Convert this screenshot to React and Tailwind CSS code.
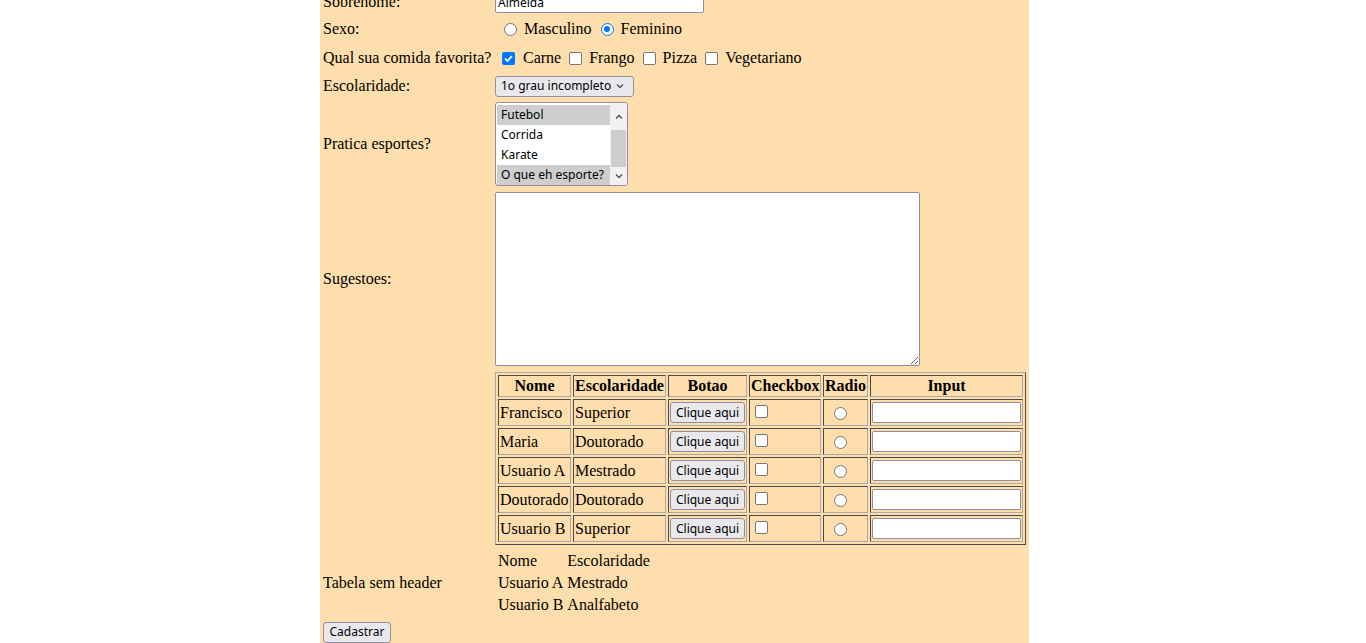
import React from 'react';

// controles no estilo padrao do navegador
const ctl = "font-['Noto_Sans',sans-serif] text-[12px] text-black";
const ctlBox = `${ctl} bg-[#e9e9ed] border border-[#8f8f9d] rounded-[3px] flex items-center leading-none`;
const btn = `${ctlBox} justify-center`;
const txt = 'bg-white border border-[#8f8f9d] rounded-[2px]';

const dados = [
  ['Francisco', 'Superior'],
  ['Maria', 'Doutorado'],
  ['Usuario A', 'Mestrado'],
  ['Doutorado', 'Doutorado'],
  ['Usuario B', 'Superior'],
];

const esportes = [
  { nome: 'Futebol', sel: true },
  { nome: 'Corrida', sel: false },
  { nome: 'Karate', sel: false },
  { nome: 'O que eh esporte?', sel: true },
];

const cellBorder = 'border border-t-[#4a4a4a] border-l-[#4a4a4a] border-r-[#a9a9a9] border-b-[#a9a9a9] p-px';

function Chevron({ up = false, className = '' }) {
  return (
    <svg width="8" height="6" viewBox="0 0 8 6" className={className}>
      <path
        d={up ? 'M1 4.5 L4 1.5 L7 4.5' : 'M1 1.5 L4 4.5 L7 1.5'}
        fill="none"
        stroke="#505050"
        strokeWidth="1.4"
      />
    </svg>
  );
}

function Check({ checked = false, className = '' }) {
  if (checked) {
    return (
      <span className={`w-[13px] h-[13px] shrink-0 rounded-[2px] bg-[#0075ff] flex items-center justify-center ${className}`}>
        <svg width="11" height="11" viewBox="0 0 11 11">
          <path d="M2 5.6 L4.4 8 L9 3" fill="none" stroke="white" strokeWidth="1.8" />
        </svg>
      </span>
    );
  }
  return (
    <span className={`w-[13px] h-[13px] shrink-0 rounded-[2px] bg-white border-[1.5px] border-[#767676] ${className}`} />
  );
}

function Radio({ checked = false, className = '' }) {
  if (checked) {
    return (
      <span className={`w-[13px] h-[13px] shrink-0 rounded-full bg-white border-[1.5px] border-[#0075ff] flex items-center justify-center ${className}`}>
        <span className="w-[6px] h-[6px] rounded-full bg-[#0075ff]" />
      </span>
    );
  }
  return (
    <span className={`w-[13px] h-[13px] shrink-0 rounded-full bg-white border-[1.5px] border-[#767676] ${className}`} />
  );
}

function Row({ label, h, children }) {
  return (
    <div className="grid grid-cols-[175px_1fr] items-center" style={{ height: h }}>
      <div className="pl-[3px]">{label}</div>
      <div className="flex items-center">{children}</div>
    </div>
  );
}

export default function App() {
  return (
    <div className="min-h-screen bg-white">
      <div className="ml-[320px] w-[709px] h-[643px] bg-[#ffdead] overflow-hidden font-['Liberation_Serif',serif] text-[16px] leading-[18px] text-black">
        <div className="-mt-[10px]">
          {/* Sobrenome */}
          <Row label="Sobrenome:" h={24}>
            <input
              readOnly
              value="Almeida"
              className={`${ctl} ${txt} w-[209px] h-[21px] px-[2px]`}
            />
          </Row>

          {/* Sexo */}
          <Row label="Sexo:" h={30}>
            <Radio className="ml-[9px] mr-[7px]" />
            <span>Masculino</span>
            <Radio checked className="ml-[9px] mr-[7px]" />
            <span>Feminino</span>
          </Row>

          {/* Comida */}
          <Row label="Qual sua comida favorita?" h={28}>
            <Check checked className="ml-[7px] mr-[8px]" />
            <span>Carne</span>
            <Check className="ml-[8px] mr-[7px]" />
            <span>Frango</span>
            <Check className="ml-[8px] mr-[7px]" />
            <span>Pizza</span>
            <Check className="ml-[8px] mr-[7px]" />
            <span>Vegetariano</span>
          </Row>

          {/* Escolaridade */}
          <Row label="Escolaridade:" h={28}>
            <div className={`${ctlBox} w-[139px] h-[21px] justify-between pl-[5px] pr-[9px]`}>
              <span>1o grau incompleto</span>
              <Chevron />
            </div>
          </Row>

          {/* Esportes */}
          <Row label="Pratica esportes?" h={88}>
            <div className="w-[133px] h-[84px] bg-white border border-[#8f8f9d] rounded-[3px] flex overflow-hidden">
              <div className={`${ctl} flex-1 pt-[2px] pl-px`}>
                {esportes.map((e) => (
                  <div
                    key={e.nome}
                    className={`h-[20px] flex items-center pl-[4px] ${e.sel ? 'bg-[#cecece]' : ''}`}
                  >
                    {e.nome}
                  </div>
                ))}
              </div>
              <div className="w-[17px] bg-[#f1f1f1] flex flex-col items-center">
                <div className="h-[27px] flex items-center">
                  <Chevron up />
                </div>
                <div className="w-[15px] flex-1 bg-[#cdcdcd]" />
                <div className="h-[18px] flex items-center">
                  <Chevron />
                </div>
              </div>
            </div>
          </Row>

          {/* Sugestoes */}
          <Row label="Sugestoes:" h={182}>
            <textarea className={`${ctl} ${txt} w-[425px] h-[174px] resize`} />
          </Row>

          {/* Tabela */}
          <Row label="" h={177}>
            <table className="border-separate border-spacing-[2px] table-fixed w-[531px] border border-t-[#a9a9a9] border-l-[#a9a9a9] border-r-[#4a4a4a] border-b-[#4a4a4a]">
              <thead>
                <tr className="h-[22px]">
                  <th className={`${cellBorder} w-[73px]`}>Nome</th>
                  <th className={`${cellBorder} w-[93px]`}>Escolaridade</th>
                  <th className={`${cellBorder} w-[79px]`}>Botao</th>
                  <th className={`${cellBorder} w-[72px]`}>Checkbox</th>
                  <th className={`${cellBorder} w-[45px]`}>Radio</th>
                  <th className={`${cellBorder} w-[153px]`}>Input</th>
                </tr>
              </thead>
              <tbody>
                {dados.map(([nome, esc]) => (
                  <tr key={nome} className="h-[27px]">
                    <td className={`${cellBorder} whitespace-nowrap`}>{nome}</td>
                    <td className={`${cellBorder} whitespace-nowrap`}>{esc}</td>
                    <td className={cellBorder}>
                      <button className={`${btn} w-[75px] h-[21px]`}>Clique aqui</button>
                    </td>
                    <td className={cellBorder}>
                      <Check className="ml-[4px] -mt-[2px] block" />
                    </td>
                    <td className={cellBorder}>
                      <Radio className="ml-[9px] mt-[2px] block" />
                    </td>
                    <td className={cellBorder}>
                      <input readOnly className={`${ctl} ${txt} w-[149px] h-[21px] block`} />
                    </td>
                  </tr>
                ))}
              </tbody>
            </table>
          </Row>

          {/* Tabela sem header */}
          <Row label="Tabela sem header" h={72}>
            <table className="border-separate border-spacing-[2px]">
              <tbody>
                <tr>
                  <td className="p-px">Nome</td>
                  <td className="p-px">Escolaridade</td>
                </tr>
                <tr>
                  <td className="p-px">Usuario A</td>
                  <td className="p-px">Mestrado</td>
                </tr>
                <tr>
                  <td className="p-px">Usuario B</td>
                  <td className="p-px">Analfabeto</td>
                </tr>
              </tbody>
            </table>
          </Row>

          <div className="h-[26px] flex items-center pl-[3px]">
            <button className={`${btn} w-[68px] h-[21px]`}>Cadastrar</button>
          </div>
        </div>
      </div>
    </div>
  );
}
